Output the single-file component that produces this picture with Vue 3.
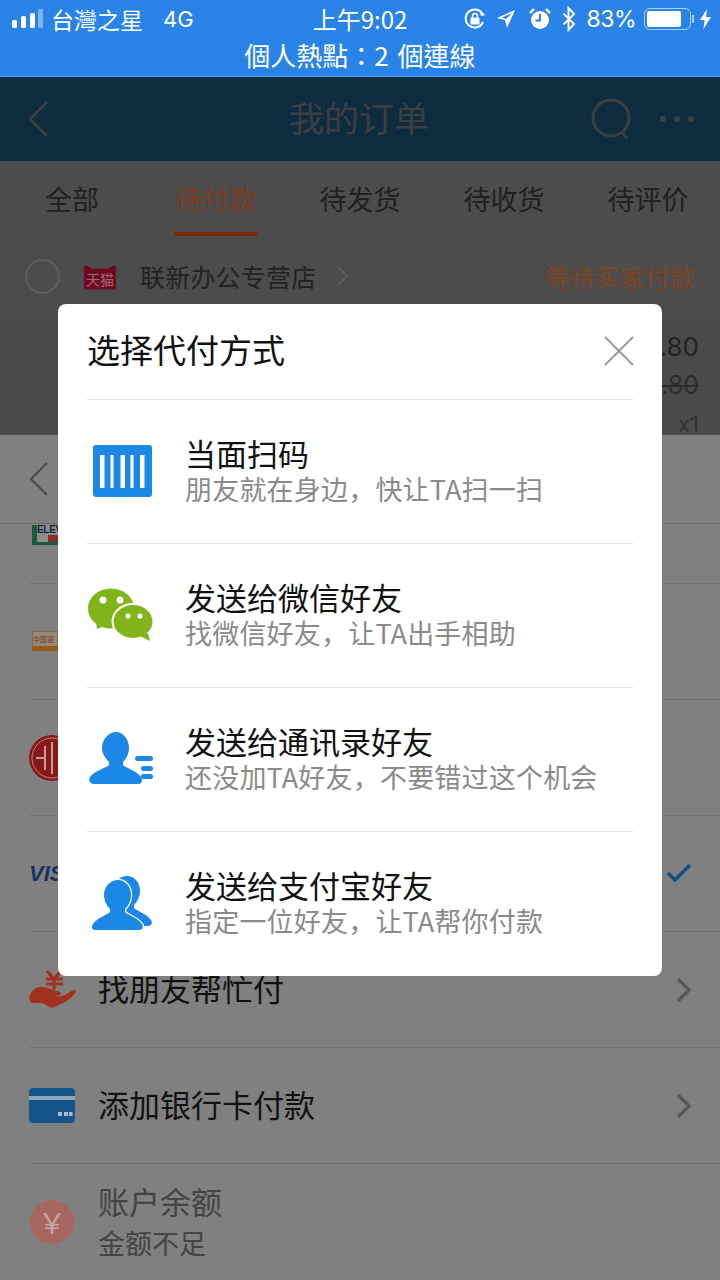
<script setup>
const tabs = ['全部', '待付款', '待发货', '待收货', '待评价']
const options = [
  { icon: 'scan', title: '当面扫码', sub: '朋友就在身边，快让TA扫一扫' },
  { icon: 'wechat', title: '发送给微信好友', sub: '找微信好友，让TA出手相助' },
  { icon: 'contacts', title: '发送给通讯录好友', sub: '还没加TA好友，不要错过这个机会' },
  { icon: 'friends', title: '发送给支付宝好友', sub: '指定一位好友，让TA帮你付款' }
]
const person = 'M26 4c8 0 13 7 13 15 0 6-3 11-6 14v3c3 3 13 6 17 12 2 3 0 6-3 6H3c-3 0-4-3-2-6 4-6 14-9 17-12v-3c-3-3-6-8-6-14 0-8 6-15 14-15z'
</script>

<template>
  <div class="page">
    <header class="status">
      <div class="status-line">
        <div class="status-left">
          <svg class="signal" width="32" height="20" viewBox="0 0 32 20">
            <rect x="0" y="11" width="5" height="8" rx="1.500" fill="#fff" />
            <rect x="9" y="7" width="5" height="12" rx="1.500" fill="#fff" />
            <rect x="18" y="4" width="5" height="15" rx="1.500" fill="#fff" />
            <rect x="26" y="0" width="5" height="19" rx="1.500" fill="#7fb4ef" />
          </svg>
          <span class="carrier">台灣之星</span>
          <span class="net">4G</span>
        </div>
        <div class="clock">上午9:02</div>
        <div class="status-right">
          <svg width="24" height="24" viewBox="0 0 24 24" fill="none">
            <path d="M20 15a9 9 0 1 1 0-7" stroke="#fff" stroke-width="2" />
            <path d="M22.500 8l-4.500 1-1-4.500z" fill="#fff" />
            <rect x="7.500" y="10.500" width="9" height="7" rx="1" fill="#fff" />
            <path d="M9.500 10.500V9a2.500 2.500 0 0 1 5 0v1.500" stroke="#fff" stroke-width="1.500" />
          </svg>
          <svg width="20" height="20" viewBox="0 0 20 20"><path d="M19 1 1 9l8 2 2 8z M16 4 10 10 6 8.600z" fill="#fff" fill-rule="evenodd" /></svg>
          <svg width="22" height="24" viewBox="0 0 22 24">
            <circle cx="11" cy="13" r="9" fill="#fff" />
            <path d="M11 7v6.500H6.500" fill="none" stroke="#2b84e8" stroke-width="2" />
            <path d="M1 6 5 2M21 6l-4-4" stroke="#fff" stroke-width="2.400" />
          </svg>
          <svg width="14" height="26" viewBox="0 0 14 26"><path d="M1.500 7.500 12 18l-5.500 6V2L12 8 1.500 18.500" fill="none" stroke="#fff" stroke-width="1.900" /></svg>
          <span class="percent">83%</span>
          <span class="battery"><span class="battery-fill"></span></span>
          <span class="battery-nub"></span>
          <svg class="bolt" width="11" height="20" viewBox="0 0 11 20"><path d="M7 0 0 11h4.500L3.500 20 11 8H6z" fill="#fff" /></svg>
        </div>
      </div>
      <div class="hotspot">個人熱點：2 個連線</div>
    </header>

    <nav class="nav">
      <svg class="nav-back" width="24" height="38" viewBox="0 0 24 38"><path d="M21 2 4 19l17 17" fill="none" stroke="#3b3f42" stroke-width="2.600" /></svg>
      <span class="nav-title">我的订单</span>
      <svg class="nav-search" width="44" height="46" viewBox="0 0 44 46" fill="none" stroke="#3b3f42" stroke-width="2.800">
        <circle cx="21" cy="21" r="18" /><path d="m32 35 5 7" />
      </svg>
      <span class="nav-dots"><i></i><i></i><i></i></span>
    </nav>

    <div class="tabs">
      <div v-for="(t, i) in tabs" :key="t" class="tab" :class="{ active: i === 1 }">
        <span class="tab-label">{{ t }}</span>
      </div>
    </div>

    <div class="store">
      <span class="radio"></span>
      <span class="tmall">天猫</span>
      <span class="store-name">联新办公专营店</span>
      <svg class="store-chev" width="14" height="24" viewBox="0 0 14 24"><path d="m2 2 10 10L2 22" fill="none" stroke="#5a5a5a" stroke-width="1.800" /></svg>
      <span class="store-state">等待买家付款</span>
    </div>

    <div class="product">
      <span class="price">.80</span>
      <span class="old-price">.80</span>
      <span class="qty">x1</span>
    </div>

    <section class="sheet">
      <div class="sheet-head">
        <svg width="22" height="36" viewBox="0 0 22 36"><path d="M19 2 3 18l16 16" fill="none" stroke="#4a4a4a" stroke-width="2" /></svg>
      </div>
      <div class="sheet-list">
        <div class="pay-row pay-short">
          <span class="seven"><b>ELEV</b><i></i></span>
        </div>
        <div class="pay-row">
          <span class="bank"><small>中国银</small></span>
        </div>
        <div class="pay-row">
          <svg class="citic" width="46" height="46" viewBox="0 0 46 46">
            <circle cx="23" cy="23" r="23" fill="#861818" />
            <circle cx="23" cy="23" r="20" fill="none" stroke="#b98484" stroke-width="1" />
            <path d="M7 23h9M16 11v24M23 7v32" stroke="#c59a9a" stroke-width="2" fill="none" />
          </svg>
        </div>
        <div class="pay-row">
          <span class="visa">VISA</span>
          <svg class="check" width="26" height="20" viewBox="0 0 26 20"><path d="m2 10 7 7L24 2" fill="none" stroke="#14507f" stroke-width="3.600" /></svg>
        </div>
        <div class="pay-row">
          <svg class="row-icon hand" width="48" height="40" viewBox="0 0 48 40">
            <path d="M18 1l7 8 7-8M17 9h17M17 14h17M25 9v11" fill="none" stroke="#a2301f" stroke-width="3.200" />
            <path d="M0 27C3 20 8 16 14 17c5 0 8 3 13 4 4 0 6 2 4 4l-7 1h9c4-1 9-6 14-6 0 4-5 8-11 12l-13 6-10-5H2z" fill="#a2301f" />
          </svg>
          <span class="row-label">找朋友帮忙付</span>
          <svg class="row-chev" width="16" height="26" viewBox="0 0 16 26"><path d="m2 2 11 11L2 24" fill="none" stroke="#585858" stroke-width="3.400" /></svg>
        </div>
        <div class="pay-row">
          <svg class="row-icon" width="46" height="36" viewBox="0 0 46 36">
            <rect width="46" height="35" rx="4" fill="#15558a" />
            <rect y="8" width="46" height="4" fill="#8ea6bb" />
            <path d="M29 24h4v4h-4zM35 24h4v4h-4zM40 24h3.500v4H40z" fill="#a9bccb" />
          </svg>
          <span class="row-label">添加银行卡付款</span>
          <svg class="row-chev" width="16" height="26" viewBox="0 0 16 26"><path d="m2 2 11 11L2 24" fill="none" stroke="#585858" stroke-width="3.400" /></svg>
        </div>
        <div class="pay-row pay-last">
          <span class="yuan">￥</span>
          <div class="balance">
            <span class="balance-name">账户余额</span>
            <span class="balance-note">金额不足</span>
          </div>
        </div>
      </div>
    </section>

    <section class="dialog">
      <div class="dialog-head">
        <h2>选择代付方式</h2>
        <svg width="30" height="30" viewBox="0 0 30 30"><path d="m1 1 28 28M29 1 1 29" stroke="#999" stroke-width="1.800" /></svg>
      </div>
      <div v-for="o in options" :key="o.icon" class="option">
        <span class="option-icon">
          <svg v-if="o.icon === 'scan'" width="59" height="52" viewBox="0 0 59 52">
            <rect width="59" height="52" rx="3" fill="#1b88e6" />
            <path d="M7 10h4.500v33H7zM17.500 10h3v33h-3zM27.500 10h4.500v33h-4.500zM37.500 10h3v33h-3zM47 10h4.500v33H47z" fill="#fff" />
          </svg>
          <svg v-else-if="o.icon === 'wechat'" width="68" height="54" viewBox="0 0 68 54">
            <ellipse cx="23" cy="20.500" rx="23" ry="20" fill="#80b419" />
            <path d="M8 34l1 7 10-4z" fill="#80b419" />
            <ellipse cx="45" cy="33.500" rx="20.500" ry="17.500" fill="#80b419" stroke="#fff" stroke-width="2" />
            <path d="M52 48l10 5-2-8z" fill="#80b419" />
            <circle cx="15" cy="12" r="3.500" fill="#fff" /><circle cx="32" cy="12" r="3.500" fill="#fff" />
            <circle cx="40" cy="28" r="2.600" fill="#fff" /><circle cx="52" cy="28" r="2.600" fill="#fff" />
          </svg>
          <svg v-else-if="o.icon === 'contacts'" width="66" height="54" viewBox="0 0 66 54">
            <path d="M27 0c7 0 13 7 13 16 0 6-3 11-6 14v3c3 3 14 6 18 12 2 3 1 7-3 7H5c-4 0-6-4-4-7 4-6 16-9 19-12v-3c-3-3-7-8-7-14C13 7 20 0 27 0z" fill="#1b88e6" />
            <rect x="46" y="24" width="18" height="5" rx="2.500" fill="#1b88e6" />
            <rect x="52" y="34" width="12" height="5" rx="2.500" fill="#1b88e6" />
            <rect x="52" y="42" width="12" height="5" rx="2.500" fill="#1b88e6" />
          </svg>
          <svg v-else width="60" height="54" viewBox="0 0 60 54">
            <path :d="person" fill="#1b88e6" transform="translate(9 -4)" />
            <path :d="person" fill="#1b88e6" stroke="#fff" stroke-width="2.500" paint-order="stroke" />
          </svg>
        </span>
        <div class="option-text">
          <span class="option-title">{{ o.title }}</span>
          <span class="option-sub">{{ o.sub }}</span>
        </div>
      </div>
    </section>
  </div>
</template>

<style scoped>
.page {
  position: relative;
  width: 720px;
  height: 1280px;
  overflow: hidden;
  background: #4c4c4c;
  font-family: "Noto Sans CJK SC", "Noto Sans", sans-serif;
}
.status {
  height: 76px;
  background: #2a84e8;
  color: #fff;
  border-bottom: 1px solid #4a97ec;
}
.status-line {
  position: relative;
  height: 38px;
  display: flex;
  align-items: center;
  justify-content: space-between;
  padding: 0 9px 0 12px;
}
.status-left, .status-right { display: flex; align-items: center; }
.carrier {
  margin-left: 7px;
  font: 23px/30px "Noto Sans CJK TC", sans-serif;
}
.net {
  margin-left: 20px;
  font: 22px/30px Inter, sans-serif;
}
.clock {
  position: absolute;
  left: 0;
  right: 0;
  text-align: center;
  font: 24px/30px "Noto Sans CJK TC", Inter, sans-serif;
}
.status-right svg { margin-right: 9px; }
.status-right svg:nth-child(2) { margin-right: 13px; }
.status-right svg:nth-child(3) { margin-right: 11px; }
.percent {
  font: 23px/30px Inter, sans-serif;
  letter-spacing: -.5px;
  margin-right: 8px;
  margin-left: 1px;
}
.battery {
  width: 47px;
  height: 22px;
  box-sizing: border-box;
  border: 1.500px solid #a8cdf6;
  border-radius: 6px;
  padding: 2px;
  display: block;
}
.battery-fill {
  display: block;
  width: 83%;
  height: 100%;
  background: #fff;
  border-radius: 2px;
}
.battery-nub {
  width: 2px;
  height: 8px;
  background: #a8cdf6;
  margin: 0 6px 0 1px;
}
.status-right .bolt { margin-right: 0; }
.hotspot {
  text-align: center;
  font: 26px/34px "Noto Sans CJK TC", sans-serif;
  word-spacing: 3px;
}

.nav {
  position: relative;
  height: 84px;
  padding: 0 2px 4px 0;
  box-sizing: border-box;
  background: #0f2c3e;
  display: flex;
  align-items: center;
  justify-content: center;
}
.nav-back { position: absolute; left: 26px; top: 23px; }
.nav-title { font-size: 35px; color: #3b3f42; line-height: 46px; }
.nav-search { position: absolute; left: 590px; top: 20px; }
.nav-dots {
  position: absolute;
  left: 660px;
  top: 39px;
  display: flex;
  gap: 8px;
}
.nav-dots i {
  width: 6px;
  height: 6px;
  border-radius: 50%;
  background: #3b3f42;
}
.tabs {
  height: 77px;
  padding-bottom: 2px;
  box-sizing: border-box;
  display: flex;
  background: #4c4c4c;
}
.tab {
  flex: 1;
  display: flex;
  justify-content: center;
  align-items: center;
}
.tab-label {
  position: relative;
  font-size: 27px;
  line-height: 40px;
  color: #202020;
}
.tab.active .tab-label { color: #7f3c20; }
.tab.active .tab-label::after {
  content: "";
  position: absolute;
  left: -2px;
  right: 0;
  bottom: -17px;
  height: 4px;
  background: #7a2c0b;
}
.store {
  height: 74px;
  padding: 0 25px 4px;
  display: flex;
  align-items: center;
  background: #4c4c4c;
  border-top: 1px solid #474747;
}
.radio {
  width: 35px;
  height: 35px;
  box-sizing: border-box;
  border: 2px solid #5e5e5e;
  border-radius: 50%;
}
.tmall {
  width: 32px;
  height: 25px;
  margin: 2px 0 0 24px;
  padding-top: 4px;
  box-sizing: border-box;
  background: #6b0a20;
  color: #a86a78;
  font-size: 14px;
  line-height: 20px;
  text-align: center;
  border-radius: 2px;
  white-space: nowrap;
  clip-path: polygon(0 0, 25% 16%, 75% 16%, 100% 0, 100% 100%, 0 100%);
}
.store-name {
  margin-left: 24px;
  font-size: 25px;
  letter-spacing: .2px;
  line-height: 36px;
  color: #222;
}
.store-chev { margin-left: 19px; }
.store-state {
  margin-left: auto;
  font-size: 25px;
  line-height: 36px;
  color: #7e4420;
}
.product {
  height: 116px;
  display: flex;
  flex-direction: column;
  align-items: flex-end;
  padding-right: 21px;
  color: #222;
  font-family: Inter, sans-serif;
  background: #4a4a4a;
}
.price { font-size: 26px; line-height: 32px; margin-top: 14px; }
.old-price {
  font-size: 25px;
  line-height: 30px;
  margin-top: 7px;
  color: #2c2c2c;
  text-decoration: line-through;
  text-decoration-thickness: 2px;
}
.qty { font-size: 22px; line-height: 28px; margin-top: 10px; color: #333; }

.sheet {
  position: absolute;
  left: 0;
  right: 0;
  top: 435px;
  bottom: 0;
  background: #808080;
}
.sheet-head {
  height: 88px;
  display: flex;
  align-items: center;
  padding-left: 28px;
  border-bottom: 1px solid #727272;
}
.sheet-list { padding-left: 29px; }
.pay-row {
  height: 115px;
  border-bottom: 1px solid #737373;
  display: flex;
  align-items: center;
  padding-right: 28px;
}
.pay-short { height: 59px; align-items: flex-start; }
.pay-last { border-bottom: 0; }
.seven {
  position: relative;
  width: 26px;
  height: 20px;
  box-sizing: border-box;
  background: #8e8e8e;
  border-left: 5px solid #175c3e;
  border-bottom: 3px solid #175c3e;
  display: block;
  margin-top: 1px;
  margin-left: 3px;
  color: #123;
}
.seven b {
  display: block;
  font: 700 10px/10px "Liberation Sans", sans-serif;
  letter-spacing: -.3px;
}
.seven i {
  position: absolute;
  right: 0;
  bottom: 0;
  width: 10px;
  height: 7px;
  background: #8a2a2a;
}
.bank {
  width: 26px;
  height: 20px;
  display: block;
  margin: -2px 0 0 3px;
  overflow: hidden;
  background: #918a7f;
  border: 1px solid #8a6a3c;
  border-bottom: 5px solid #985914;
  box-sizing: border-box;
}
.bank small { display: block; font-size: 7px; line-height: 14px; color: #7d3d14; white-space: nowrap; }
.citic { display: block; }
.visa {
  font: italic 700 22px/24px "Liberation Sans", sans-serif;
  color: #14335f;
}
.check { margin-left: auto; margin-top: -2px; }
.row-icon { flex: none; }
.hand { margin-right: -2px; }
.row-label {
  margin-left: 23px;
  margin-bottom: 4px;
  font-size: 31px;
  line-height: 44px;
  color: #111;
}
.row-chev { margin-left: auto; }
.yuan {
  width: 44px;
  height: 44px;
  margin-left: 1px;
  border-radius: 50%;
  background: #a76660;
  color: #c8a8a5;
  font-size: 28px;
  line-height: 44px;
  text-align: center;
}
.balance {
  margin-left: 24px;
  display: flex;
  flex-direction: column;
}
.balance-name { font-size: 31px; line-height: 42px; color: #444; }
.balance-note { font-size: 27px; line-height: 42px; color: #444; }

.dialog {
  position: absolute;
  left: 58px;
  top: 304px;
  width: 604px;
  height: 672px;
  background: #fff;
  border-radius: 8px;
  padding: 0 29px;
  box-sizing: border-box;
  overflow: hidden;
}
.dialog-head {
  height: 95px;
  display: flex;
  align-items: center;
  justify-content: space-between;
  border-bottom: 1px solid #e0e0e0;
}
.dialog-head h2 {
  margin: 0 0 6px;
  font-size: 33px;
  font-weight: 400;
  line-height: 46px;
  color: #111;
}
.dialog-head svg { margin: 0 -1px 2px 0; }
.option {
  height: 144px;
  box-sizing: border-box;
  display: flex;
  align-items: center;
  border-bottom: 1px solid #e0e0e0;
}
.option:last-child { border-bottom: 0; }
.option-icon {
  width: 70px;
  flex: none;
  display: flex;
  justify-content: center;
  margin: -2px 28px 0 0;
}
.option-text { display: flex; flex-direction: column; margin-bottom: 4px; }
.option-title { font-size: 31px; line-height: 38px; color: #111; }
.option-sub { font-size: 27px; letter-spacing: .2px; line-height: 34px; color: #8a8a8a; }
</style>
<style>
html, body { margin: 0; background: #808080; }
</style>
